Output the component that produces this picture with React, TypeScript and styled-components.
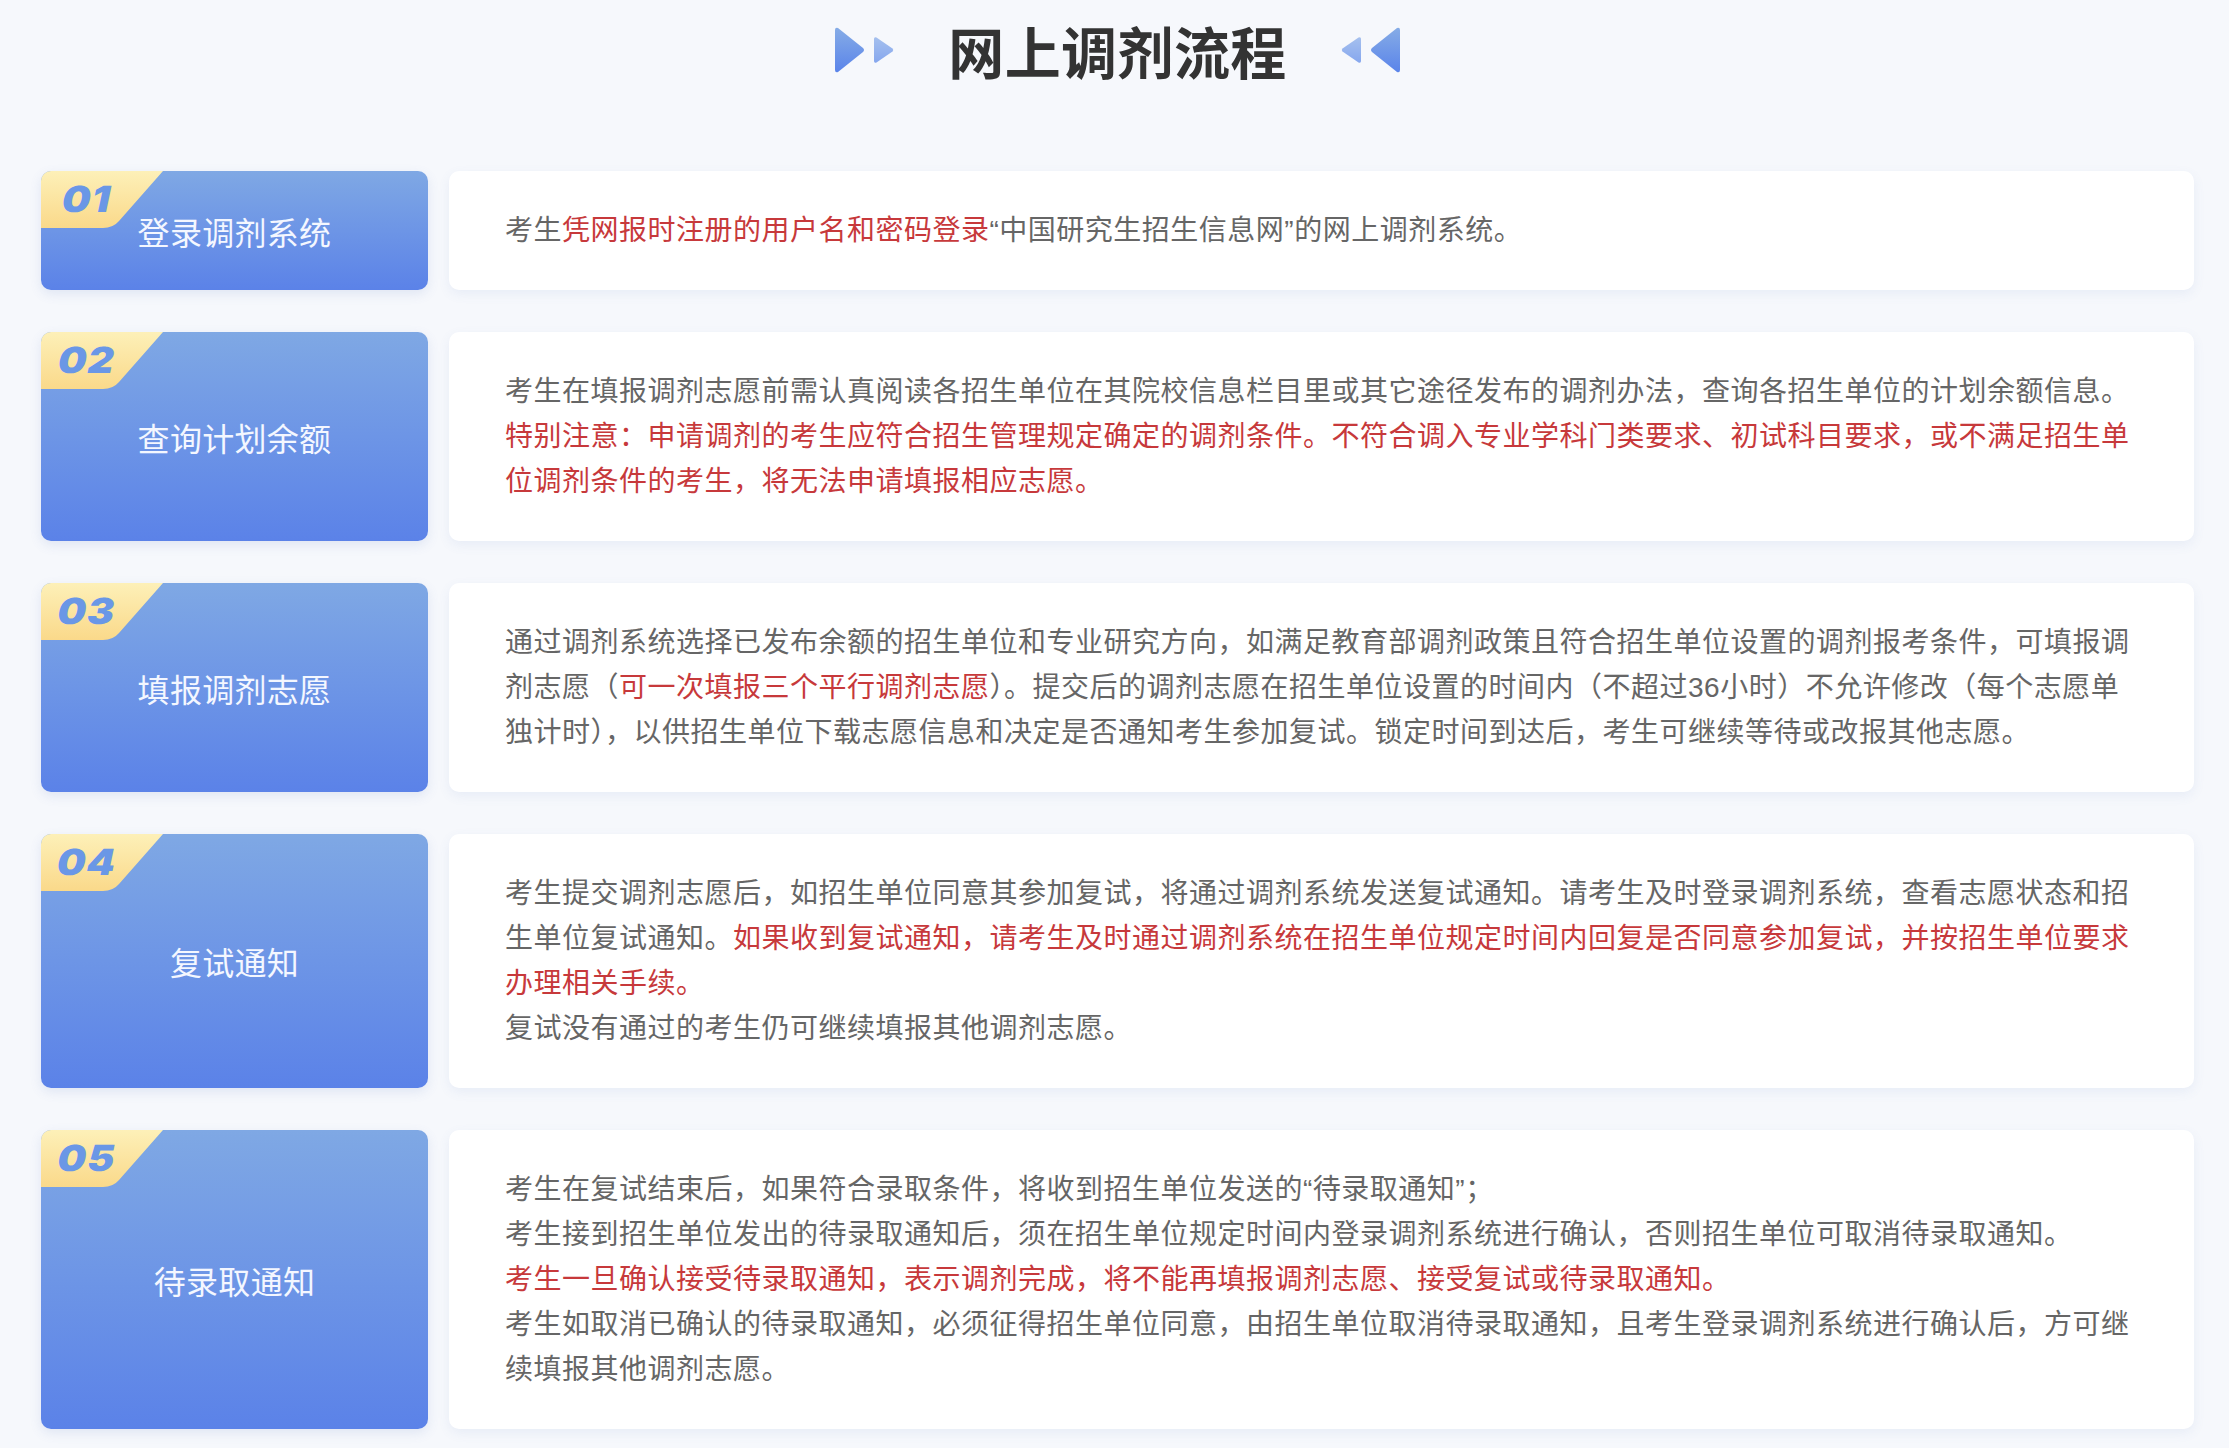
import React from 'react';
import styled, { createGlobalStyle } from 'styled-components';

const GlobalStyle = createGlobalStyle`
    html, body {
        margin: 0;
        padding: 0;
        background: #f6f8fc;
    }
    body {
        font-family: 'Liberation Sans', 'Noto Sans CJK SC', sans-serif;
    }
`;

const Page = styled.div`
    box-sizing: border-box;
    width: 2229px;
    height: 1448px;
    padding: 0 35px 0 41px;
    overflow: hidden;
`;

const Header = styled.header`
    height: 100px;
    margin-bottom: 71px;
    display: flex;
    align-items: center;
    justify-content: center;
`;

const Title = styled.h1`
    margin: 0 54px;
    font-size: 56px;
    line-height: 100px;
    font-weight: 700;
    color: #333;
    letter-spacing: 0.4px;
    font-family: 'Noto Sans CJK SC', sans-serif;
`;

const Arrows = styled.svg<{ $flip?: boolean }>`
    display: block;
    width: 59px;
    height: 46px;
    transform: ${(p) => (p.$flip ? 'scaleX(-1)' : 'none')};
`;

const Steps = styled.div`
    display: flex;
    flex-direction: column;
    gap: 42px;
`;

const Step = styled.section`
    display: flex;
    align-items: stretch;
    gap: 21px;
`;

const Label = styled.div`
    position: relative;
    flex: 0 0 387px;
    display: flex;
    align-items: center;
    justify-content: center;
    border-radius: 10px;
    overflow: hidden;
    background: linear-gradient(180deg, #7fa8e4 0%, #5b82e8 100%);
    box-shadow: 0 4px 12px rgba(90, 120, 190, 0.14);
    color: #f4f7ff;
    font-size: 32px;
    font-weight: 400;
    letter-spacing: 0.3px;
    font-family: 'Noto Sans CJK SC', sans-serif;
`;

const Badge = styled.svg`
    position: absolute;
    top: 0;
    left: 0;
    width: 122px;
    height: 57px;
`;

const Num = styled.span`
    position: absolute;
    top: 3px;
    left: 14px;
    width: 64px;
    text-align: center;
    font-family: 'Inter', sans-serif;
    font-size: 36px;
    line-height: 50px;
    font-weight: 900;
    color: #6a97e6;
    letter-spacing: 1px;
    transform: skewX(-12deg) scaleX(1.12);
`;

const Content = styled.div`
    flex: 1;
    box-sizing: border-box;
    padding: 37px 56px;
    background: #fff;
    border-radius: 10px;
    box-shadow: 0 4px 12px rgba(90, 120, 190, 0.09);
    font-size: 28px;
    line-height: 45px;
    letter-spacing: 0.5px;
    color: #666;
`;

const Line = styled.div``;

const Red = styled.span`
    color: #c7393b;
`;

const ArrowPair = ({ flip }: { flip?: boolean }) => (
    <Arrows $flip={flip} viewBox="0 0 59 46">
        <defs>
            <linearGradient id={flip ? 'bigR' : 'bigL'} x1="0" y1="0" x2="0" y2="1">
                <stop offset="0" stopColor="#86ace6" />
                <stop offset="1" stopColor="#5a84ea" />
            </linearGradient>
            <linearGradient id={flip ? 'smallR' : 'smallL'} x1="0" y1="0" x2="0" y2="1">
                <stop offset="0" stopColor="#a5c0ee" />
                <stop offset="1" stopColor="#86a7ee" />
            </linearGradient>
        </defs>
        <path
            d="M0 3 Q0 0 3 1 L28 21 Q30 23 28 25 L3 45 Q0 46 0 43 Z"
            fill={`url(#${flip ? 'bigR' : 'bigL'})`}
        />
        <path
            d="M39 12 Q39 9.5 41.500 10.500 L57.500 21.500 Q59 23 57.500 24.500 L41.500 35.500 Q39 36.500 39 34 Z"
            fill={`url(#${flip ? 'smallR' : 'smallL'})`}
        />
    </Arrows>
);

const steps = [
    {
        no: '01',
        name: '登录调剂系统',
        body: (
            <Line>
                考生<Red>凭网报时注册的用户名和密码登录</Red>“中国研究生招生信息网”的网上调剂系统。
            </Line>
        ),
    },
    {
        no: '02',
        name: '查询计划余额',
        body: (
            <Line>
                考生在填报调剂志愿前需认真阅读各招生单位在其院校信息栏目里或其它途径发布的调剂办法，查询各招生单位的计划余额信息。
                <Red>
                    特别注意：申请调剂的考生应符合招生管理规定确定的调剂条件。不符合调入专业学科门类要求、初试科目要求，或不满足招生单位调剂条件的考生，将无法申请填报相应志愿。
                </Red>
            </Line>
        ),
    },
    {
        no: '03',
        name: '填报调剂志愿',
        body: (
            <Line>
                通过调剂系统选择已发布余额的招生单位和专业研究方向，如满足教育部调剂政策且符合招生单位设置的调剂报考条件，可填报调剂志愿（
                <Red>可一次填报三个平行调剂志愿</Red>
                ）。提交后的调剂志愿在招生单位设置的时间内（不超过36小时）不允许修改（每个志愿单独计时），以供招生单位下载志愿信息和决定是否通知考生参加复试。锁定时间到达后，考生可继续等待或改报其他志愿。
            </Line>
        ),
    },
    {
        no: '04',
        name: '复试通知',
        body: (
            <>
                <Line>
                    考生提交调剂志愿后，如招生单位同意其参加复试，将通过调剂系统发送复试通知。请考生及时登录调剂系统，查看志愿状态和招生单位复试通知。
                    <Red>
                        如果收到复试通知，请考生及时通过调剂系统在招生单位规定时间内回复是否同意参加复试，并按招生单位要求办理相关手续。
                    </Red>
                </Line>
                <Line>复试没有通过的考生仍可继续填报其他调剂志愿。</Line>
            </>
        ),
    },
    {
        no: '05',
        name: '待录取通知',
        body: (
            <>
                <Line>考生在复试结束后，如果符合录取条件，将收到招生单位发送的“待录取通知”；</Line>
                <Line>
                    考生接到招生单位发出的待录取通知后，须在招生单位规定时间内登录调剂系统进行确认，否则招生单位可取消待录取通知。
                </Line>
                <Line>
                    <Red>考生一旦确认接受待录取通知，表示调剂完成，将不能再填报调剂志愿、接受复试或待录取通知。</Red>
                </Line>
                <Line>
                    考生如取消已确认的待录取通知，必须征得招生单位同意，由招生单位取消待录取通知，且考生登录调剂系统进行确认后，方可继续填报其他调剂志愿。
                </Line>
            </>
        ),
    },
];

export default function App() {
    return (
        <Page>
            <GlobalStyle />
            <Header>
                <ArrowPair />
                <Title>网上调剂流程</Title>
                <ArrowPair flip />
            </Header>
            <Steps>
                {steps.map((s) => (
                    <Step key={s.no}>
                        <Label>
                            <Badge viewBox="0 0 122 57">
                                <defs>
                                    <linearGradient id={`badge${s.no}`} x1="0" y1="0" x2="0" y2="1">
                                        <stop offset="0" stopColor="#fdf0b8" />
                                        <stop offset="1" stopColor="#fad98a" />
                                    </linearGradient>
                                </defs>
                                <path
                                    d="M0 0 H122 L78 50 Q72 57 62 57 H0 Z"
                                    fill={`url(#badge${s.no})`}
                                />
                            </Badge>
                            <Num>{s.no}</Num>
                            {s.name}
                        </Label>
                        <Content>{s.body}</Content>
                    </Step>
                ))}
            </Steps>
        </Page>
    );
}
